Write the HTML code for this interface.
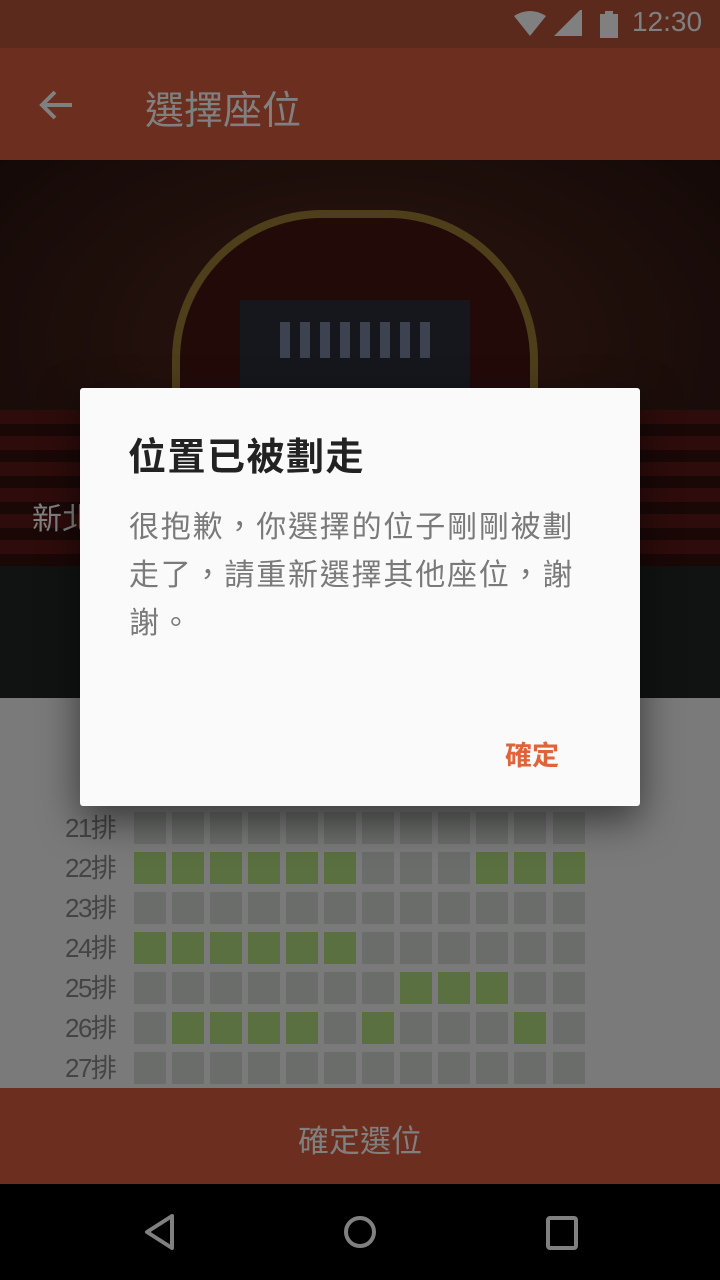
<!DOCTYPE html>
<html><head><meta charset="utf-8"><style>
*{margin:0;padding:0;box-sizing:border-box}
body{width:720px;height:1280px;position:relative;overflow:hidden;background:#7a7a7a;font-family:"Liberation Sans","Noto Sans CJK TC",sans-serif}
.abs{position:absolute}
.seat{position:absolute;width:32px;height:32px;background:#6b6d6b}
.g{background:#5a7040}
.lbl{position:absolute;left:65px;font-size:26px;color:#444;line-height:32px;letter-spacing:-1.5px}
</style></head><body>
<div class="abs" style="left:0;top:0;width:720px;height:48px;background:#5c2a1c"></div>
<svg class="abs" style="left:512px;top:10px" width="110" height="30" viewBox="0 0 110 30">
<path d="M2 6 Q18 -4 34 6 L18 26 Z" fill="#808080"/>
<path d="M42 26 L70 26 L70 -2 Z" fill="#808080"/>
<rect x="88" y="4" width="18" height="24" fill="#808080"/><rect x="93" y="1" width="8" height="4" fill="#808080"/>
</svg>
<div class="abs" style="left:632px;top:6px;font-size:28px;color:#808080">12:30</div>
<div class="abs" style="left:0;top:48px;width:720px;height:112px;background:#6b2e1f"></div>
<svg class="abs" style="left:36px;top:86px" width="40" height="40" viewBox="0 0 40 40"><path d="M36 19 H8 M19 6 L6 19 L19 32" stroke="#808080" stroke-width="4" fill="none"/></svg>
<div class="abs" style="left:145px;top:80px;font-size:39px;color:#808080">選擇座位</div>
<div class="abs" style="left:0;top:160px;width:720px;height:406px;background:radial-gradient(ellipse at 50% 45%,#2e1410 0%,#1f0f0b 50%,#120807 100%)"></div>
<div class="abs" style="left:172px;top:210px;width:366px;height:290px;border:8px solid #4f3e1a;border-bottom:none;border-radius:150px 150px 0 0;background:#220a09"></div>
<div class="abs" style="left:240px;top:300px;width:230px;height:90px;background:#15171c"></div>
<div class="abs" style="left:280px;top:322px;width:150px;height:36px;background:repeating-linear-gradient(90deg,#3c4250 0 10px,#15171c 10px 20px)"></div>
<div class="abs" style="left:0;top:410px;width:720px;height:156px;background:repeating-linear-gradient(180deg,#2e0c0b 0 14px,#1a0807 14px 26px)"></div>
<div class="abs" style="left:32px;top:494px;font-size:30px;color:#808080">新北</div>
<div class="abs" style="left:0;top:566px;width:720px;height:132px;background:#111313"></div>
<div class="abs" style="left:0;top:1088px;width:720px;height:96px;background:#6b2e1f"></div>
<div class="abs" style="left:0;top:1116px;width:720px;text-align:center;font-size:31px;color:#808080">確定選位</div>
<div class="abs" style="left:0;top:1184px;width:720px;height:96px;background:#000"></div>
<svg class="abs" style="left:0;top:1184px" width="720" height="96" viewBox="0 0 720 96">
<path d="M172 32 L147 48 L172 64 Z" stroke="#808080" stroke-width="4" fill="none" stroke-linejoin="round"/>
<circle cx="360" cy="48" r="14" stroke="#808080" stroke-width="4" fill="none"/>
<rect x="548" y="34" width="28" height="30" rx="2" stroke="#808080" stroke-width="4" fill="none"/>
</svg>
<div id="grid"></div>
<script>
var xs=[134,172,210,248,286,324,362,400,438,476,514,553];
var greens={22:[1,2,3,4,5,6,10,11,12],24:[1,2,3,4,5,6],25:[8,9,10],26:[2,3,4,5,7,11]};
var h='';
for(var r=21;r<=27;r++){var y=812+(r-21)*40;
h+='<div class="lbl" style="top:'+(y)+'px">'+r+'排</div>';
for(var c=1;c<=12;c++){var g=(greens[r]||[]).indexOf(c)>=0;
h+='<div class="seat'+(g?' g':'')+'" style="left:'+xs[c-1]+'px;top:'+y+'px"></div>';}}
document.getElementById('grid').innerHTML=h;
</script>
<div class="abs" style="left:80px;top:388px;width:560px;height:418px;background:#fafafa;border-radius:3px;box-shadow:0 14px 40px rgba(0,0,0,.55)">
<div class="abs" style="left:48px;top:38px;font-size:38px;letter-spacing:1.5px;color:#222;font-weight:bold;white-space:nowrap">位置已被劃走</div>
<div class="abs" style="left:49px;top:116px;font-size:30px;letter-spacing:1.8px;line-height:48px;color:#7a7a7a;white-space:nowrap">很抱歉，你選擇的位子剛剛被劃<br>走了，請重新選擇其他座位，謝<br>謝。</div>
<div class="abs" style="left:425px;top:346px;font-size:27px;color:#e0633a;font-weight:bold">確定</div>
</div>
</body></html>
